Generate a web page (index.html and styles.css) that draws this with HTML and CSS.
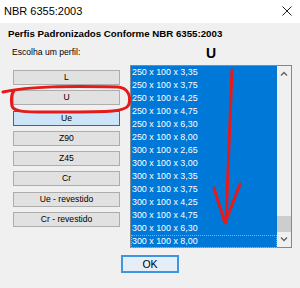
FILE: index.html
```html
<!DOCTYPE html>
<html lang="pt-BR">
<head>
<meta charset="UTF-8">
<title>NBR 6355:2003</title>
<link rel="stylesheet" href="styles.css">
</head>
<body>
<div class="window">
  <div class="titlebar">
    <span class="title">NBR 6355:2003</span>
    <svg class="close" width="10" height="10" viewBox="0 0 10 10">
      <path d="M0.5 0.5 L9.5 9.5 M9.5 0.5 L0.5 9.5" stroke="#222" stroke-width="1" fill="none"/>
    </svg>
  </div>

  <div class="content">
    <h1 class="heading">Perfis Padronizados Conforme NBR 6355:2003</h1>

    <div class="main">
      <div class="left">
        <div class="label">Escolha um perfil:</div>
        <div class="buttons">
          <button class="btn">L</button>
          <button class="btn">U</button>
          <button class="btn selected">Ue</button>
          <button class="btn">Z90</button>
          <button class="btn">Z45</button>
          <button class="btn">Cr</button>
          <button class="btn">Ue - revestido</button>
          <button class="btn">Cr - revestido</button>
        </div>
      </div>

      <div class="right">
        <div class="shape-name">U</div>
        <div class="listbox">
          <ul class="items">
            <li>250 x 100 x 3,35</li>
            <li>250 x 100 x 3,75</li>
            <li>250 x 100 x 4,25</li>
            <li>250 x 100 x 4,75</li>
            <li>250 x 100 x 6,30</li>
            <li>250 x 100 x 8,00</li>
            <li>300 x 100 x 2,65</li>
            <li>300 x 100 x 3,00</li>
            <li>300 x 100 x 3,35</li>
            <li>300 x 100 x 3,75</li>
            <li>300 x 100 x 4,25</li>
            <li>300 x 100 x 4,75</li>
            <li>300 x 100 x 6,30</li>
            <li class="focused">300 x 100 x 8,00</li>
          </ul>
          <div class="scrollbar">
            <div class="arrow">
              <svg width="8" height="5" viewBox="0 0 8 5"><path d="M1 4.5 L4 1.5 L7 4.5" stroke="#606060" stroke-width="1.3" fill="none"/></svg>
            </div>
            <div class="track"></div>
            <div class="thumb"></div>
            <div class="arrow">
              <svg width="8" height="5" viewBox="0 0 8 5"><path d="M1 0.5 L4 3.5 L7 0.5" stroke="#606060" stroke-width="1.3" fill="none"/></svg>
            </div>
          </div>
        </div>
      </div>
    </div>

    <div class="actions">
      <button class="ok-btn">OK</button>
    </div>
  </div>

  <!-- red marks drawn over the screenshot -->
  <svg class="marks" width="300" height="288" viewBox="0 0 300 288">
    <path d="M3 92 C30 86, 70 86, 118 87 C128 88, 131 96, 129 104 C127 112, 110 112, 60 112 C30 112, 14 113, 12 106 C11 100, 11 94, 14 91"
          stroke="#e41b1b" stroke-width="3" fill="none" stroke-linecap="round"/>
    <path d="M232 70 C230 110, 228 160, 226 222" stroke="#e41b1b" stroke-width="3" fill="none" stroke-linecap="round"/>
    <path d="M214 188 L225 223 L240 184" stroke="#e41b1b" stroke-width="3" fill="none" stroke-linecap="round" stroke-linejoin="round"/>
  </svg>
</div>
</body>
</html>
```

FILE: styles.css
```css
body {
  margin: 0;
  padding: 0;
  font-family: "Liberation Sans", Arial, sans-serif;
  color: #000;
}

.window {
  position: relative;
  width: 300px;
  height: 288px;
  background-color: #f0f0f0;
  overflow: hidden;
}

.titlebar {
  height: 23px;
  background-color: #fff;
  display: flex;
  align-items: center;
  justify-content: space-between;
  padding: 0 8px 2px 4px;
  box-sizing: border-box;
}

.title {
  font-size: 11px;
}

.content {
  padding-top: 5px;
}

.heading {
  margin: 0 0 0 8px;
  font-size: 9.7px;
  font-weight: bold;
  line-height: 12px;
}

.main {
  display: flex;
  align-items: flex-start;
  margin-top: 5px;
}

.left {
  width: 107px;
  margin-left: 13px;
}

.label {
  font-size: 8.6px;
  line-height: 12px;
  padding-top: 1px;
  margin: 0 0 12px -1px;
}

.buttons {
  display: flex;
  flex-direction: column;
  gap: 5.3px;
}

.btn {
  height: 15px;
  width: 100%;
  padding: 0;
  margin: 0;
  font-family: inherit;
  font-size: 8.6px;
  line-height: 13px;
  color: #000;
  background-color: #e1e1e1;
  border: 1px solid #adadad;
  box-sizing: border-box;
}

.btn.selected {
  background-color: #cce4f7;
  border-color: #0078d7;
}

.right {
  width: 162px;
  margin-left: 10px;
}

.shape-name {
  font-size: 14px;
  font-weight: bold;
  line-height: 16px;
  text-align: center;
  margin-bottom: 4px;
}

.listbox {
  display: flex;
  height: 183px;
  border: 1px solid #828790;
  background-color: #fff;
  box-sizing: border-box;
}

.items {
  flex: 1;
  margin: 0;
  padding: 0;
  list-style: none;
  background-color: #0078d7;
}

.items li {
  height: 13px;
  line-height: 13px;
  font-size: 8.9px;
  color: #fff;
  padding-left: 1px;
  box-sizing: border-box;
}

.items li.focused {
  border: 1px dotted #c9a071;
  line-height: 11px;
  padding-left: 0;
}

.scrollbar {
  width: 14px;
  display: flex;
  flex-direction: column;
  background-color: #f0f0f0;
}

.arrow {
  height: 15px;
  display: flex;
  align-items: center;
  justify-content: center;
}

.track {
  flex: 1;
}

.thumb {
  height: 16px;
  background-color: #cdcdcd;
}

.actions {
  display: flex;
  justify-content: center;
  margin-top: 7px;
}

.ok-btn {
  width: 58px;
  height: 18px;
  padding: 0;
  font-family: inherit;
  font-size: 10.5px;
  color: #000;
  background-color: #e5eef6;
  border: 2px solid #3c97e0;
  box-sizing: border-box;
}

.marks {
  position: absolute;
  left: 0;
  top: 0;
  pointer-events: none;
}
```
